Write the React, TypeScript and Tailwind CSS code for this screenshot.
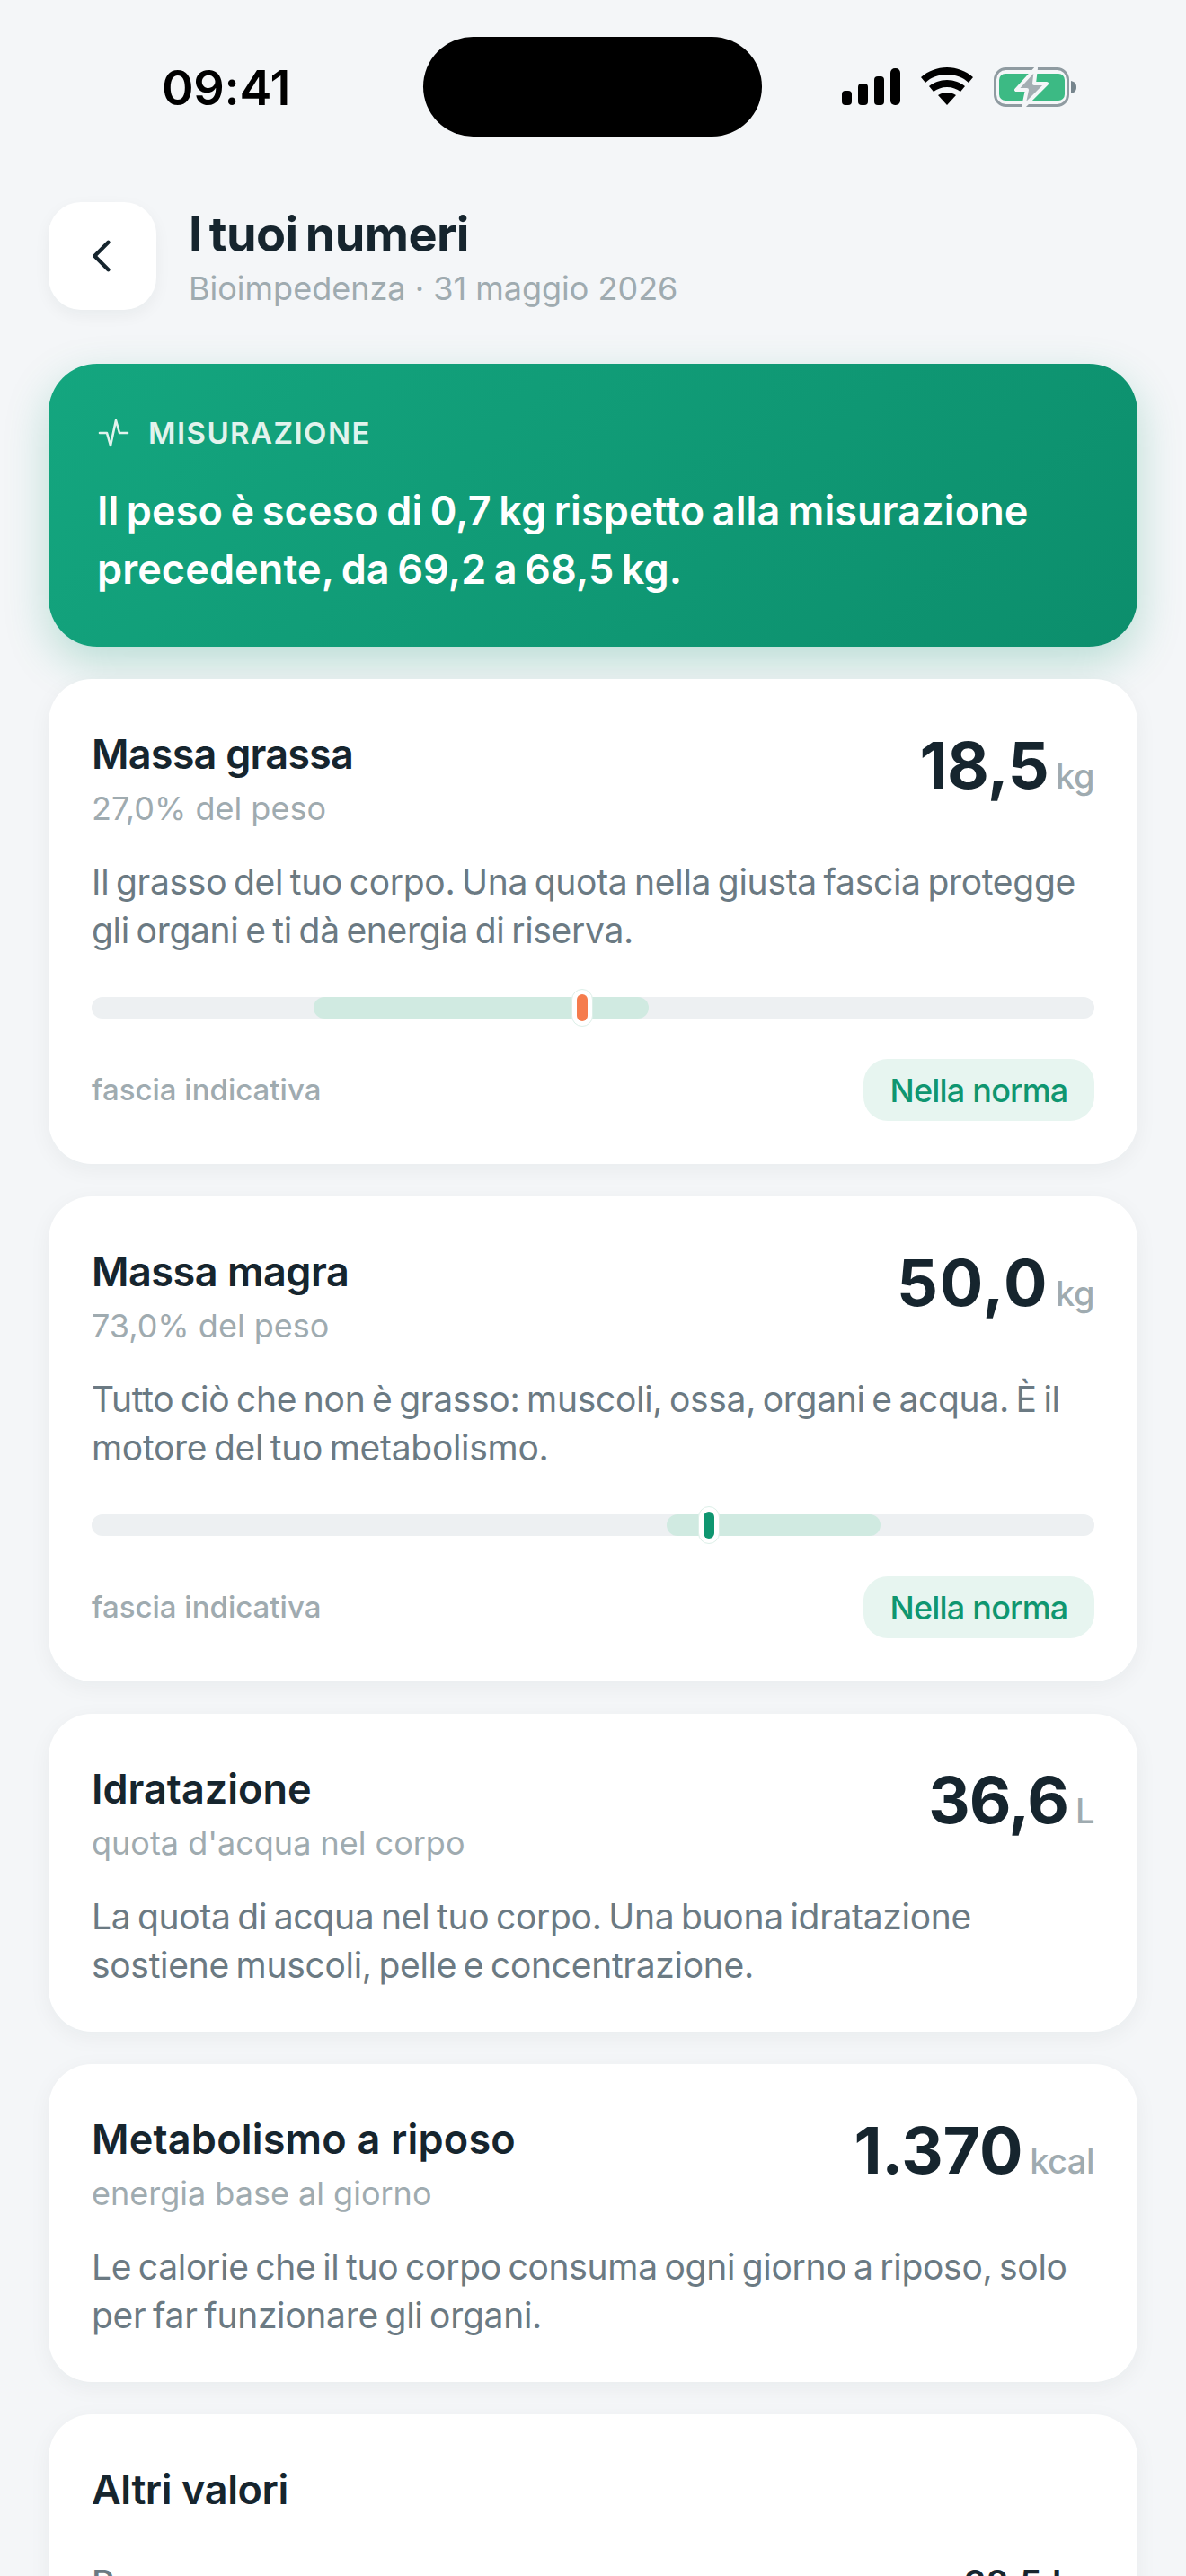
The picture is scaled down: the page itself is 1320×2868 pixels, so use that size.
const font = { fontFamily: '"Inter", "Liberation Sans", sans-serif' };

function Bar({ bandClass, markerClass, colorClass }: { bandClass: string; markerClass: string; colorClass: string }) {
  return (
    <div className="relative mt-[47px] h-[24px] rounded-full bg-[#edf0f2]">
      <div className={`absolute top-0 h-[24px] rounded-full bg-[#d0eae1] ${bandClass}`} />
      <div className={`absolute top-[-9px] flex h-[42px] w-[24px] items-center justify-center rounded-full border border-[#dcefe8] bg-white ${markerClass}`}>
        <div className={`h-[30px] w-[12px] rounded-full ${colorClass}`} />
      </div>
    </div>
  );
}

function Card({ title, titleClass, sub, value, valueClass, unit, desc, children }: { title: string; titleClass: string; sub: string; value: string; valueClass: string; unit: string; desc: React.ReactNode; children?: React.ReactNode }) {
  return (
    <div className="rounded-[48px] bg-white px-[48px] pt-[54px] pb-[47px] shadow-[0_6px_24px_rgba(26,38,46,0.05)]">
      <div className="flex items-start justify-between">
        <div>
          <div className={`text-[45px] leading-[60px] font-semibold text-[#16252e] ${titleClass}`}>{title}</div>
          <div className="mt-[8px] text-[36px] leading-[44px] text-[#9fabb0]">{sub}</div>
        </div>
        <div className="mt-[2px] flex items-baseline gap-[8px]">
          <span className={`text-[72px] leading-[80px] font-bold text-[#16252e] ${valueClass}`}>{value}</span>
          <span className="text-[38px] font-medium text-[#9fabb0] tracking-[-0.5px]">{unit}</span>
        </div>
      </div>
      <p className="mt-[33px] text-[39px] leading-[54px] text-[#6b7a83] tracking-[-0.3px] [word-spacing:-3px]">{desc}</p>
      {children}
    </div>
  );
}

function Footer() {
  return (
    <div className="mt-[45px] mb-[1px] flex items-center justify-between">
      <span className="text-[33px] font-medium text-[#9fabb0]">fascia indicativa</span>
      <span className="flex h-[69px] w-[257px] items-center justify-center rounded-[27px] bg-[#e7f5f0] text-[36px] font-medium tracking-[-0.8px] text-[#0f9670]">Nella norma</span>
    </div>
  );
}

export default function App() {
  return (
    <div style={font} className="h-[2868px] w-[1320px] overflow-hidden bg-[#f4f6f8]">
      <div className="relative flex h-[225px] items-start justify-between pl-[180px] pr-[122px] pt-[42px]">
        <span className="mt-[24px] text-[54px] leading-[64px] font-semibold tracking-[-0.3px] text-black">09:41</span>
        <div className="absolute left-[471px] top-[41px] h-[111px] w-[377px] rounded-full bg-black" />
        <div className="mt-[33px] flex items-start gap-[23px]">
          <svg width="65" height="44" viewBox="0 0 65 44"><rect x="0" y="26" width="11" height="16" rx="4" /><rect x="18" y="18" width="11" height="24" rx="4" /><rect x="36" y="10" width="11" height="32" rx="4" /><rect x="54" y="1" width="11" height="41" rx="5" /></svg>
          <svg width="58" height="44" viewBox="0 0 58 44"><path d="M29 0C18 0 8 4 0 11l5 6c6-6 15-9 24-9s18 3 24 9l5-6C50 4 40 0 29 0z" /><path d="M29 14c-8 0-15 3-20 7l5 6c4-3 9-5 15-5s11 2 15 5l5-6c-5-4-12-7-20-7z" /><path d="M29 28c-4 0-7 1-10 3l10 11 10-11c-3-2-6-3-10-3z" /></svg>
          <svg width="92" height="46" viewBox="0 0 92 46">
            <rect x="1.5" y="1.5" width="81" height="41" rx="12" fill="none" stroke="#8f9ba1" strokeWidth="3" />
            <rect x="6" y="7" width="73" height="30" rx="7" fill="#3cba84" />
            <path d="M86 15c4 1 6 3 6 7s-2 6-6 7z" fill="#76858d" />
            <path d="M47 1 25 25H37L33 44 59 18H45z" fill="#a4aeb3" stroke="#f4f6f8" strokeWidth="4" strokeLinejoin="round" />
          </svg>
        </div>
      </div>
      <div className="flex items-center gap-[36px] px-[54px]">
        <div className="flex h-[120px] w-[120px] items-center justify-center rounded-[36px] bg-white shadow-[0_6px_18px_rgba(26,38,46,0.05)]">
          <svg width="52" height="52" viewBox="0 0 24 24" fill="none" stroke="#16252e" strokeWidth="2" strokeLinecap="round" strokeLinejoin="round"><path d="M15 5l-7 7 7 7" /></svg>
        </div>
        <div>
          <div className="mt-[2px] text-[54px] leading-[64px] font-bold tracking-[-0.6px] [word-spacing:-4px] text-[#16252e]">I tuoi numeri</div>
          <div className="mt-[5px] text-[36px] leading-[46px] text-[#9fabb0]">Bioimpedenza · 31 maggio 2026</div>
        </div>
      </div>
      <div className="mx-[54px] mt-[60px] h-[315px] rounded-[54px] bg-[linear-gradient(135deg,#14a67f,#0c8e6c)] px-[54px] pt-[55px] shadow-[0_18px_48px_rgba(15,150,112,0.25)]">
        <div className="flex items-center gap-[21px]">
          <svg width="36" height="32" viewBox="0 0 36 32" fill="none" stroke="#e2f3ed" strokeWidth="2.6" strokeLinecap="round" strokeLinejoin="round"><path d="M3 16H11L15 30 21 2 25 16H34" /></svg>
          <span className="text-[33px] leading-[44px] font-semibold tracking-[1.45px] text-[#e2f3ed]">MISURAZIONE</span>
        </div>
        <p className="mt-[32px] text-[45px] leading-[65px] font-semibold tracking-[0.1px] [word-spacing:-3px] text-white">Il peso è sceso di 0,7 kg rispetto alla misurazione<br />precedente, da 69,2 a 68,5 kg.</p>
      </div>
      <div className="mx-[54px] mt-[36px] flex flex-col gap-[36px]">
        <Card title="Massa grassa" titleClass="tracking-[-0.8px]" sub="27,0% del peso" value="18,5" valueClass="tracking-[-0.6px]" unit="kg" desc={<>Il grasso del tuo corpo. Una quota nella giusta fascia protegge<br />gli organi e ti dà energia di riserva.</>}>
          <Bar bandClass="left-[247px] w-[373px]" markerClass="left-[534px]" colorClass="bg-[#f57c4d]" />
          <Footer />
        </Card>
        <Card title="Massa magra" titleClass="tracking-[-0.5px]" sub="73,0% del peso" value="50,0" valueClass="tracking-[1.5px]" unit="kg" desc={<>Tutto ciò che non è grasso: muscoli, ossa, organi e acqua. È il<br />motore del tuo metabolismo.</>}>
          <Bar bandClass="left-[640px] w-[238px]" markerClass="left-[675px]" colorClass="bg-[#0f9670]" />
          <Footer />
        </Card>
        <Card title="Idratazione" titleClass="tracking-[0px]" sub="quota d'acqua nel corpo" value="36,6" valueClass="tracking-[-1px]" unit="L" desc={<>La quota di acqua nel tuo corpo. Una buona idratazione<br />sostiene muscoli, pelle e concentrazione.</>} />
        <Card title="Metabolismo a riposo" titleClass="tracking-[0.2px]" sub="energia base al giorno" value="1.370" valueClass="tracking-[-0.3px]" unit="kcal" desc={<>Le calorie che il tuo corpo consuma ogni giorno a riposo, solo<br />per far funzionare gli organi.</>} />
        <div className="h-[400px] rounded-[48px] bg-white px-[48px] pt-[54px] shadow-[0_6px_24px_rgba(26,38,46,0.05)]">
          <div className="text-[45px] leading-[60px] font-semibold tracking-[-0.4px] text-[#16252e]">Altri valori</div>
          <div className="mt-[47px] flex items-center justify-between">
            <span className="text-[39px] leading-[54px] font-medium text-[#6b7a83]">Peso</span>
            <span className="text-[39px] leading-[54px] font-semibold tracking-[0.7px] text-[#16252e]">68,5 kg</span>
          </div>
        </div>
      </div>
    </div>
  );
}
